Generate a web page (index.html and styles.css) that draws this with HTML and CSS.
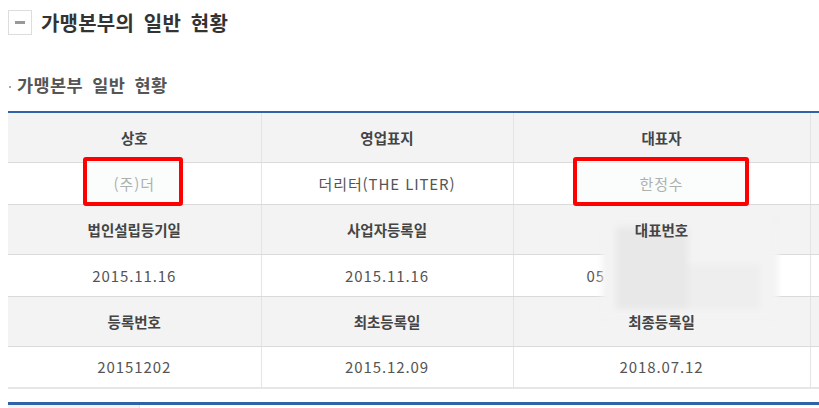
FILE: index.html
```html
<!DOCTYPE html>
<html lang="ko">
<head>
<meta charset="utf-8">
<link rel="stylesheet" href="styles.css">
</head>
<body>
<div class="page">
  <div class="title-row">
    <span class="toggle"><span class="minus"></span></span>
    <h1 class="title">가맹본부의 일반 현황</h1>
  </div>
  <h2 class="subtitle"><span class="dot"></span>가맹본부 일반 현황</h2>
  <div class="table-wrap">
    <table class="info">
      <colgroup>
        <col class="c1"><col class="c2"><col class="c3"><col class="c4">
      </colgroup>
      <tr class="head"><th><span>상호</span></th><th><span>영업표지</span></th><th><span>대표자</span></th><th></th></tr>
      <tr class="data"><td>(주)더</td><td>더리터(THE LITER)</td><td>한정수</td><td></td></tr>
      <tr class="head"><th><span>법인설립등기일</span></th><th><span>사업자등록일</span></th><th><span>대표번호</span></th><th></th></tr>
      <tr class="data"><td>2015.11.16</td><td>2015.11.16</td><td class="phone">05</td><td></td></tr>
      <tr class="head"><th><span>등록번호</span></th><th><span>최초등록일</span></th><th><span>최종등록일</span></th><th></th></tr>
      <tr class="data"><td>20151202</td><td>2015.12.09</td><td>2018.07.12</td><td></td></tr>
    </table>
    <div class="mark mark-a"></div>
    <div class="mark mark-b"></div>
    <div class="blur"><div class="blur-dark"></div><div class="blur-light"></div></div>
  </div>
  <div class="next-table">
    <div class="next-cell"></div>
    <div class="next-cell wide"></div>
  </div>
</div>
</body>
</html>
```

FILE: styles.css
```css
* { box-sizing: border-box; }
html, body { margin: 0; padding: 0; overflow: hidden; background: #fff; }
body {
  font-family: "Noto Sans CJK KR", "Noto Sans", sans-serif;
  color: #444;
}
.page { padding: 10px 0 0 8px; width: 1100px; }
.title-row { display: flex; align-items: center; gap: 9px; height: 25px; }
.toggle {
  width: 24px; height: 25px;
  border: 1px solid #ddd;
  display: flex; align-items: center; justify-content: center;
}
.minus { width: 10px; height: 3px; background: #999; }
.title {
  margin: 0; font-size: 20px; font-weight: 700; color: #333;
  letter-spacing: 0.2px; word-spacing: 4px; line-height: 25px;
}
.subtitle {
  margin: 38px 0 0 0; font-size: 17.5px; font-weight: 700; color: #555;
  letter-spacing: 0.4px; word-spacing: 4px;
  display: flex; align-items: center; line-height: 24px; height: 24px;
}
.dot { width: 2px; height: 2px; background: #aaa; margin: 4px 6px 0 1px; }
.table-wrap { position: relative; margin-top: 14px; }
.info {
  border-collapse: collapse; table-layout: fixed; width: 1002px;
  border-top: 2px solid #2f62a6;
  border-bottom: 2px solid #e6e6e6;
}
.c1 { width: 253px; } .c2 { width: 252px; } .c3 { width: 297px; } .c4 { width: 200px; }
.info th, .info td {
  text-align: center; padding: 0;
  border-left: 1px solid #e4e4e4;
}
.info th:first-child, .info td:first-child { border-left: none; }
.head th {
  height: 50px; background: #f3f3f3; font-size: 14.5px; font-weight: 700; color: #444;
  border-bottom: 1px solid #dadada;
}
.head th span { position: relative; z-index: 2; }
.data td {
  height: 42px; background: #fff; font-size: 15px; font-weight: 400; color: #555;
  letter-spacing: 0.9px; border-bottom: 1px solid #dadada;
}
.data td.phone { text-align: left; padding-left: 73px; }
.mark {
  position: absolute; border: 4px solid #ff0000; border-radius: 3px;
  background: rgba(245, 251, 247, 0.55);
}
.mark-a { left: 75px; top: 46px; width: 100px; height: 49px; }
.mark-b { left: 565px; top: 46px; width: 176px; height: 49px; }
.blur {
  position: absolute; left: 594px; top: 112px; width: 176px; height: 94px;
  background: #f3f3f3; filter: blur(3px); z-index: 1;
}
.blur-dark { position: absolute; left: 14px; top: 4px; width: 72px; height: 82px; background: #e8e8e8; }
.blur-light { position: absolute; left: 86px; top: 42px; width: 72px; height: 44px; background: #eeeeee; }
.next-table {
  margin-top: 13px; border-top: 3px solid #2f62a6; display: flex; height: 20px;
}
.next-cell { width: 132px; background: #f3f3f3; border-right: 1px solid #e4e4e4; }
.next-cell.wide { flex: 1; background: #fff; }
```
